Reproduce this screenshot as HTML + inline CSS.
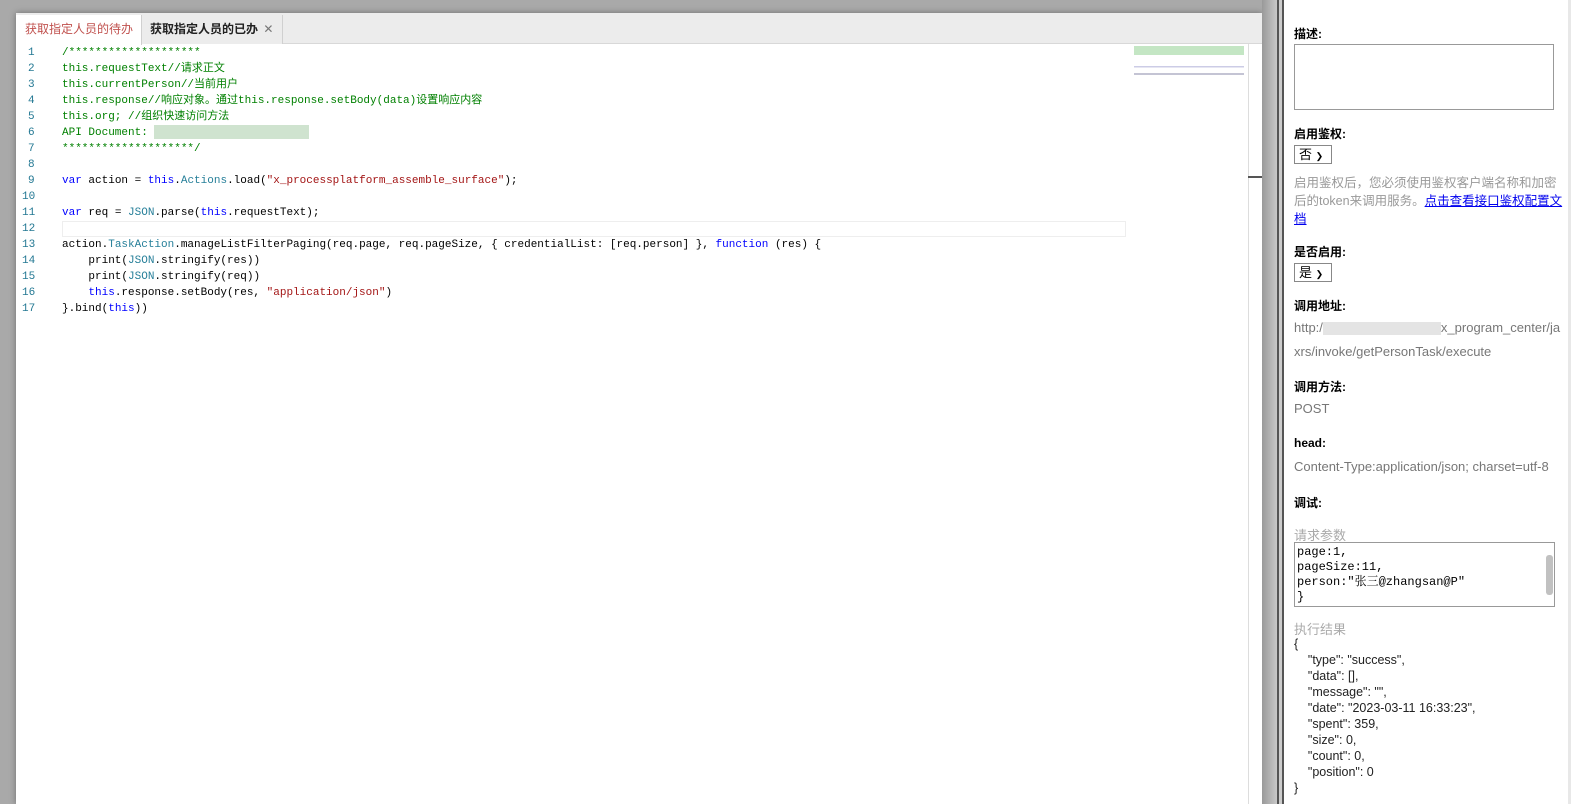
<!DOCTYPE html>
<html><head><meta charset="utf-8"><style>
*{margin:0;padding:0;box-sizing:border-box}
html,body{width:1571px;height:804px;overflow:hidden}
body{background:#a9a9a9;position:relative;font-family:"Liberation Sans","Noto Sans CJK SC",sans-serif}
.ed{position:absolute;left:16px;top:13px;width:1246px;height:791px;background:#fff;box-shadow:0 0 6px rgba(0,0,0,.35)}
.tabs{height:31px;background:#ececec;border-bottom:1px solid #d8d8d8;position:relative}
.tab{position:absolute;top:2px;height:29px;font-size:12px;line-height:29px;padding:0 9px;border-right:1px solid #d0d0d0;white-space:nowrap}
.t1{left:0;width:126px;background:#fff;color:#c0504d;height:30px}
.t2{left:126px;width:141px;color:#222;font-weight:bold;background:#ececec;padding:0 8px}
.code{position:absolute;top:32px;left:0;font-family:"Liberation Mono","Noto Sans CJK SC",monospace;font-size:11px;line-height:16px}
.ln{position:absolute;left:12px;width:20px;color:#237893}
.l{position:absolute;left:46px;white-space:pre;color:#000}
.c{color:#008000}.k{color:#0000ff}.t{color:#267f99}.s{color:#a31515}
.mm{position:absolute;left:1232px;top:31px;width:1px;height:770px;background:#ddd}
.right{position:absolute;left:1284px;top:0;width:284px;height:804px;background:#fff;font-size:13px;color:#000}
.lab{position:absolute;left:10px;font-weight:bold;font-size:12px}
.val{position:absolute;left:10px;color:#777;font-size:13px}
.au{position:absolute;left:10px;white-space:nowrap;color:#999;font-size:12.5px;line-height:18px}
</style></head><body>
<div class="ed">
 <div class="tabs">
  <div class="tab t1">获取指定人员的待办</div>
  <div class="tab t2">获取指定人员的已办 <span style="font-weight:normal;color:#777;margin-left:2px">✕</span></div>
 </div>
 <div class="code">
  <div class="ln" style="top:0">1</div><div class="l c" style="top:0">/********************</div>
  <div class="ln" style="top:16px">2</div><div class="l c" style="top:16px">this.requestText//请求正文</div>
  <div class="ln" style="top:32px">3</div><div class="l c" style="top:32px">this.currentPerson//当前用户</div>
  <div class="ln" style="top:48px">4</div><div class="l c" style="top:48px">this.response//响应对象。通过this.response.setBody(data)设置响应内容</div>
  <div class="ln" style="top:64px">5</div><div class="l c" style="top:64px;height:13px;overflow:hidden">this.org; //组织快速访问方法</div>
  <div class="ln" style="top:80px">6</div><div class="l c" style="top:80px">API Document: <span style="display:inline-block;width:155px;height:14px;background:#cfe3cf;vertical-align:middle"></span></div>
  <div class="ln" style="top:96px">7</div><div class="l c" style="top:96px">********************/</div>
  <div class="ln" style="top:112px">8</div>
  <div class="ln" style="top:128px">9</div><div class="l" style="top:128px"><span class="k">var</span> action = <span class="k">this</span>.<span class="t">Actions</span>.load(<span class="s">"x_processplatform_assemble_surface"</span>);</div>
  <div class="ln" style="top:144px;left:6px">10</div>
  <div class="ln" style="top:160px;left:6px">11</div><div class="l" style="top:160px"><span class="k">var</span> req = <span class="t">JSON</span>.parse(<span class="k">this</span>.requestText);</div>
  <div class="ln" style="top:176px;left:6px">12</div><div style="position:absolute;left:46px;top:176px;width:1064px;height:16px;border:1px solid #eee"></div>
  <div class="ln" style="top:192px;left:6px">13</div><div class="l" style="top:192px">action.<span class="t">TaskAction</span>.manageListFilterPaging(req.page, req.pageSize, { credentialList: [req.person] }, <span class="k">function</span> (res) {</div>
  <div class="ln" style="top:208px;left:6px">14</div><div class="l" style="top:208px">    print(<span class="t">JSON</span>.stringify(res))</div>
  <div class="ln" style="top:224px;left:6px">15</div><div class="l" style="top:224px">    print(<span class="t">JSON</span>.stringify(req))</div>
  <div class="ln" style="top:240px;left:6px">16</div><div class="l" style="top:240px">    <span class="k">this</span>.response.setBody(res, <span class="s">"application/json"</span>)</div>
  <div class="ln" style="top:256px;left:6px">17</div><div class="l" style="top:256px">}.bind(<span class="k">this</span>))</div>
 </div>
 <div style="position:absolute;left:1118px;top:33px;width:110px;height:45px;opacity:.5;background:linear-gradient(#8c8 0 20%,transparent 20% 45%,#99c 45% 48%,transparent 48% 60%,#88a 60% 65%,transparent 65%)"></div>
 <div class="mm"></div>
 <div style="position:absolute;left:1232px;top:163px;width:14px;height:2px;background:#555"></div>
</div>
<div style="position:absolute;left:1262px;top:0;width:15px;height:804px;background:linear-gradient(90deg,#999,#c8c8c8)"></div>
<div style="position:absolute;left:1277px;top:0;width:2px;height:804px;background:#555"></div>
<div style="position:absolute;left:1279px;top:0;width:3px;height:804px;background:#ccc"></div>
<div style="position:absolute;left:1282px;top:0;width:2px;height:804px;background:#555"></div>
<div class="right">
 <div class="lab" style="top:25px">描述:</div>
 <div style="position:absolute;left:10px;top:44px;width:260px;height:66px;border:1px solid #999"></div>
 <div class="lab" style="top:125px">启用鉴权:</div>
 <div style="position:absolute;left:10px;top:145px;width:38px;height:19px;border:1px solid #888;font-size:13px;padding-left:4px;line-height:17px">否 <span style="font-size:9px">❯</span></div>
 <div class="au" style="top:174px">启用鉴权后，您必须使用鉴权客户端名称和加密</div>
 <div class="au" style="top:192px">后的token来调用服务。<span style="color:#00e;text-decoration:underline">点击查看接口鉴权配置文</span></div>
 <div class="au" style="top:210px"><span style="color:#00e;text-decoration:underline">档</span></div>
 <div class="lab" style="top:243px">是否启用:</div>
 <div style="position:absolute;left:10px;top:263px;width:38px;height:19px;border:1px solid #888;font-size:13px;padding-left:4px;line-height:17px">是 <span style="font-size:9px">❯</span></div>
 <div class="lab" style="top:297px">调用地址:</div>
 <div class="val" style="top:316px;line-height:24px;width:274px;white-space:nowrap">http:/<span style="display:inline-block;width:118px;height:13px;background:#e4e4e4;vertical-align:middle"></span>x_program_center/ja<br>xrs/invoke/getPersonTask/execute</div>
 <div class="lab" style="top:378px">调用方法:</div>
 <div class="val" style="top:401px">POST</div>
 <div class="lab" style="top:436px">head:</div>
 <div class="val" style="top:459px">Content-Type:application/json; charset=utf-8</div>
 <div class="lab" style="top:494px">调试:</div>
 <div class="val" style="top:525px;color:#aaa">请求参数</div>
 <div style="position:absolute;left:10px;top:542px;width:261px;height:65px;border:1px solid #999;font-family:'Liberation Mono','Noto Serif CJK SC',monospace;font-size:12px;line-height:15px;padding:2px 2px;color:#000">page:1,<br>pageSize:11,<br>person:"张三@zhangsan@P"<br>}
  <div style="position:absolute;right:1px;top:12px;width:7px;height:40px;background:#c1c1c1;border-radius:3px"></div></div>
 <div class="val" style="top:619px;color:#aaa">执行结果</div>
 <div style="position:absolute;left:10px;top:636px;line-height:16px;font-size:12.5px;color:#222;white-space:pre">{
    "type": "success",
    "data": [],
    "message": "",
    "date": "2023-03-11 16:33:23",
    "spent": 359,
    "size": 0,
    "count": 0,
    "position": 0
}</div>
</div>
<div style="position:absolute;left:1568px;top:0;width:3px;height:804px;background:#e8e8e8"></div>
</body></html>
